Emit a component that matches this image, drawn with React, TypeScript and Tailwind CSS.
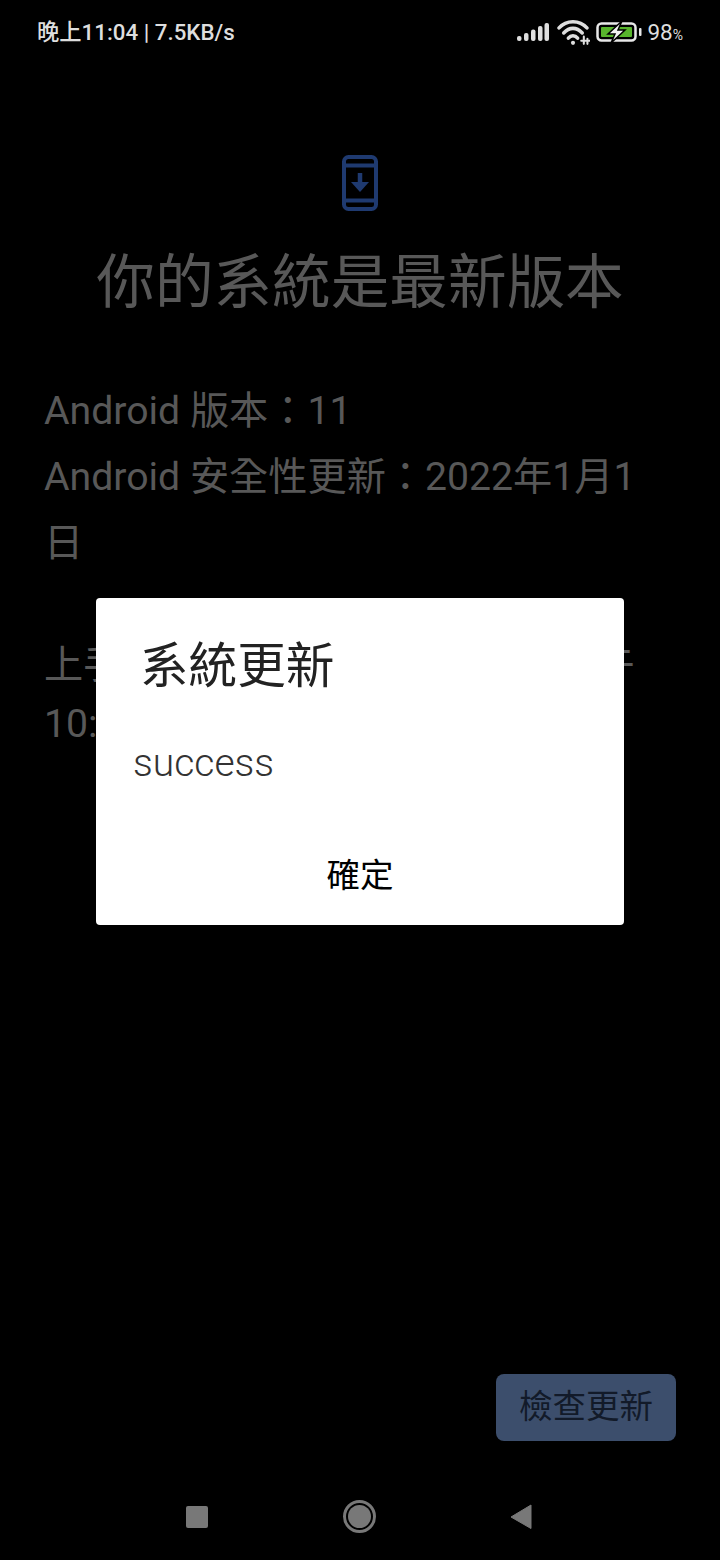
const sans = 'font-["Roboto","Noto_Sans_CJK_TC",sans-serif]';

const StatusBar = () => (
    <div className="flex h-[64px] items-center justify-between pl-[37px] pr-[37px] text-[#dedede]">
        <span className="text-[22.3px] leading-none font-medium">晚上11:04 | 7.5KB/s</span>
        <div className="flex items-center">
            <svg width="32" height="20" viewBox="0 0 32 20" fill="currentColor">
                <rect x="0" y="14" width="4.5" height="5" rx="2" />
                <rect x="7" y="11" width="4.5" height="8" rx="2" />
                <rect x="14" y="7.5" width="4.5" height="11.5" rx="2" />
                <rect x="21" y="4" width="4.5" height="15" rx="2" />
                <rect x="27.5" y="1" width="4.5" height="18" rx="2" />
            </svg>
            <svg className="ml-[8px]" width="33" height="27" viewBox="0 0 32 26" fill="none" stroke="currentColor" strokeWidth="3.4" strokeLinecap="round">
                <path d="M2 8.5 C9 0.5 22 0.5 29 8.5" />
                <path d="M6.5 13.5 C12 7.5 19 7.5 24.5 13.5" />
                <path d="M11 18.5 C13.5 15.5 17.5 15.5 20 18.5" />
                <circle cx="15.5" cy="23" r="2" fill="currentColor" stroke="none" />
                <path d="M26 17 V24 M29.5 19 V24 M23.5 21 H31.5" strokeWidth="2" />
            </svg>
            <svg className="ml-[6px]" width="46" height="22" viewBox="0 0 46 22">
                <rect x="1.5" y="2.5" width="38" height="17" rx="4" fill="none" stroke="#e8e8e8" strokeWidth="2.5" />
                <rect x="5" y="6" width="31" height="10" rx="1" fill="#58b52c" />
                <path d="M26 0 L12 13 H19 L15 22 L29 9 H22 Z" fill="#f2f2f2" stroke="#000" strokeWidth="1.5" />
                <rect x="43" y="7" width="2.5" height="8" rx="1" fill="#e8e8e8" />
            </svg>
            <span className="ml-[5px] text-[22.5px] leading-none">
                98<span className="text-[14px]">%</span>
            </span>
        </div>
    </div>
);

const UpdateIcon = () => (
    <svg width="36" height="56" viewBox="0 0 36 56" fill="none" stroke="#1f3a70" strokeWidth="4">
        <rect x="2" y="2" width="32" height="52" rx="4.5" />
        <path d="M2 10.5 H34 M2 45.5 H34" />
        <path d="M18 18 V30" strokeWidth="4.5" />
        <path d="M9 27 H27 L18 37 Z" fill="#1f3a70" stroke="none" />
    </svg>
);

const App = () => {
    return (
        <div className={`relative flex h-[1560px] w-[720px] flex-col overflow-hidden bg-black ${sans}`}>
            <StatusBar />
            <div className="mt-[91px] flex justify-center">
                <UpdateIcon />
            </div>
            <h1 className="mt-[32px] text-center text-[58.6px] leading-[80px] font-normal text-[#585858]">
                你的系統是最新版本
            </h1>
            <div className="mt-[55px] pl-[44px] pr-[50px] text-[39.2px] text-[#585858]">
                <p className="leading-[66px]">Android 版本：11</p>
                <p className="leading-[66px]">Android 安全性更新：2022年1月1日</p>
                <p className="mt-[60px] whitespace-nowrap leading-[59px]">上手檢查時：2022 年 1{'\u2009'}月1日下午</p>
                <p className="leading-[59px]">10:30</p>
            </div>
            <div className="mt-auto flex justify-end pr-[44px]">
                <button className="flex h-[67px] w-[180px] items-center justify-center rounded-[8px] bg-[#3c4e6c] text-[33.5px] text-[#121a29]">
                    檢查更新
                </button>
            </div>
            <div className="mt-[42px] flex h-[77px] items-start justify-between pl-[186px] pr-[188px] pt-[17px]">
                <div className="mt-[6px] h-[22px] w-[22px] rounded-[2px] bg-[#787878]" />
                <div className="flex h-[33px] w-[33px] items-center justify-center rounded-full border-[3px] border-[#787878]">
                    <div className="h-[23px] w-[23px] rounded-full bg-[#787878]" />
                </div>
                <svg className="mt-[4px]" width="22" height="26" viewBox="0 0 22 26">
                    <path d="M21 1 V24.5 L1 13 Z" fill="#787878" stroke="#787878" strokeLinejoin="round" />
                </svg>
            </div>
            <div className="absolute left-[96px] top-[598px] h-[327px] w-[528px] rounded-[4px] bg-white">
                <h2 className="pl-[44px] pt-[39px] text-[48.6px] leading-[60px] font-normal text-[#222]">系統更新</h2>
                <p className="pl-[37px] pt-[44px] text-[39px] leading-[44px] font-light text-[#333]">success</p>
                <button className="absolute bottom-[27px] left-0 w-full text-center text-[33.5px] leading-[44px] text-black">
                    確定
                </button>
            </div>
        </div>
    );
};

export default App;
